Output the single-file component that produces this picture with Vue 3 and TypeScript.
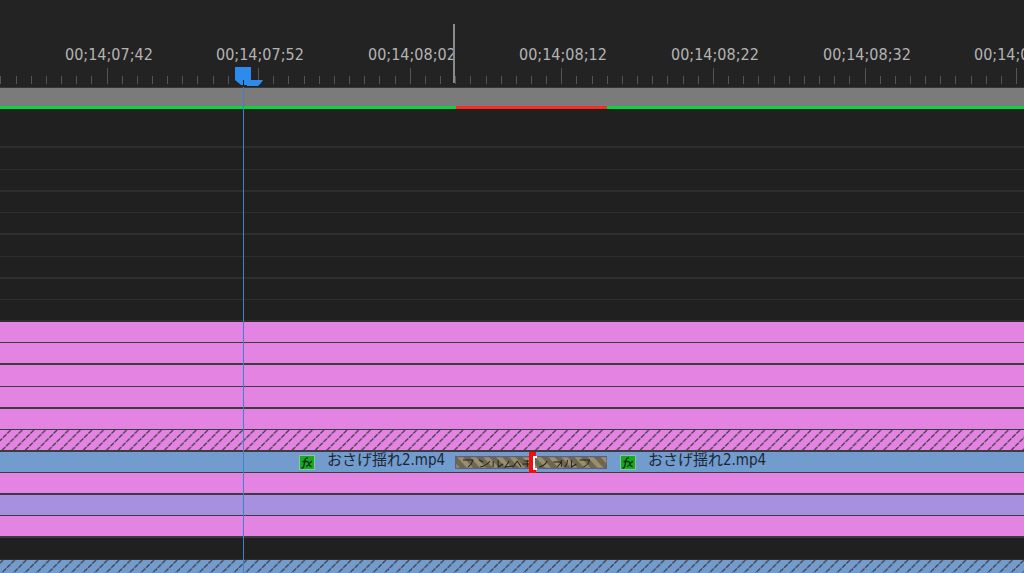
<script setup lang="ts">
interface Row { kind: string; h: number; heavy: boolean; clips?: boolean }

const labels = [
  '00;14;07;32', '00;14;07;42', '00;14;07;52', '00;14;08;02',
  '00;14;08;12', '00;14;08;22', '00;14;08;32', '00;14;08;42',
]
const span = 1024
const first = 107
const step = 151.6
const pct = (v: number) => `${(v / span) * 100}%`

const marks = labels.map((text, i) => ({ text, left: pct(Math.floor(first + (i - 1) * step)) }))
const ticks = Array.from({ length: 69 }, (_, i) => i - 8).map((n) => ({
  major: n % 10 === 0,
  left: pct(Math.floor(first + (n * step) / 10)),
}))

const rows: Row[] = [
  { kind: 'empty', h: 39, heavy: true },
  { kind: 'empty', h: 22, heavy: false },
  { kind: 'empty', h: 22, heavy: true },
  { kind: 'empty', h: 21, heavy: false },
  { kind: 'empty', h: 22, heavy: true },
  { kind: 'empty', h: 22, heavy: false },
  { kind: 'empty', h: 22, heavy: true },
  { kind: 'empty', h: 21, heavy: false },
  { kind: 'empty', h: 22, heavy: true },
  { kind: 'pink', h: 21, heavy: false },
  { kind: 'pink', h: 22, heavy: true },
  { kind: 'pink', h: 22, heavy: false },
  { kind: 'pink', h: 22, heavy: true },
  { kind: 'pink', h: 21, heavy: false },
  { kind: 'pink hatch', h: 22, heavy: true },
  { kind: 'blue', h: 21, heavy: false, clips: true },
  { kind: 'pink', h: 22, heavy: true },
  { kind: 'violet', h: 21, heavy: false },
  { kind: 'pink', h: 22, heavy: true },
  { kind: 'empty', h: 22, heavy: false },
  { kind: 'blue hatch', h: 22, heavy: false },
]
const clipName = 'おさげ揺れ2.mp4'
const clips = [{ left: pct(299) }, { left: pct(620) }]
</script>

<template>
  <main class="timeline">
    <header class="ruler">
      <span v-for="m in marks" :key="m.text" class="label" :style="{ left: m.left }">{{ m.text }}</span>
      <i v-for="t in ticks" :key="t.left" class="tick" :class="{ major: t.major }" :style="{ left: t.left }"></i>
      <i class="snap"></i>
    </header>
    <div class="workbar"></div>
    <div class="render"><i class="ready lead"></i><i class="pending"></i><i class="ready rest"></i></div>
    <section class="tracks">
      <div v-for="(r, i) in rows" :key="i" class="row" :class="[r.kind, { heavy: r.heavy }]" :style="{ height: r.h + 'px' }">
        <svg v-if="r.kind.includes('hatch')" class="lines" width="100%" height="100%" aria-hidden="true">
          <defs>
            <pattern :id="'h' + i" :x="r.kind.includes('blue') ? 4 : 0" width="11.6" height="22" patternUnits="userSpaceOnUse">
              <path d="M-.9 0 l-22 22 M10.7 0 l-22 22 M22.3 0 l-22 22 M33.9 0 l-22 22" stroke="#463f4a" stroke-width="1.3" stroke-dasharray="5 1" fill="none" />
            </pattern>
          </defs>
          <rect width="100%" height="100%" :fill="`url(#h${i})`" />
        </svg>
        <template v-if="r.clips">
          <div v-for="c in clips" :key="c.left" class="clip" :style="{ left: c.left }">
            <svg class="fx" viewBox="0 0 16 15" aria-hidden="true">
              <rect x=".5" y=".5" width="15" height="14" fill="#12ab22" stroke="#9dbb9f" />
              <path d="M2.5 13 Q4.5 13.5 5 10 L6 5 Q6.5 2.5 9 3 M3.5 6.5 H8 M8 6.5 Q9.5 6.5 10 9 T12.5 11.5 M13 6.5 Q11.5 6.5 10 9 T7 11.5" fill="none" stroke="#0a2d10" stroke-width="1.3" />
            </svg>
            <span class="name">{{ clipName }}</span>
          </div>
          <div class="transition">
            <svg class="bar" viewBox="0 0 152 13" preserveAspectRatio="none" aria-hidden="true">
              <defs>
                <pattern id="stripe" width="13" height="13" patternUnits="userSpaceOnUse">
                  <rect width="13" height="13" fill="#9a9070" />
                  <path d="M-6 0 H1 L13 13 H6 Z M7 0 H14 L26 13 H19 Z" fill="#6c6653" />
                </pattern>
              </defs>
              <rect x=".5" y=".5" width="151" height="12" fill="url(#stripe)" stroke="#685c7c" stroke-width="1.5" />
              <path d="M8 4 H18 Q17 8 13 11 M24 4 L28 6 M25 11 Q31 10 35 5 M38 5 V11 M43 4 V11 L48 8 M54 5 L50 11 L58 10 M62 5 L58 11 M62 5 L66 11 M69 5 H76 M67 8 H78 M72 4 V11 M84 11 Q89 10 92 5 M98 6 H106 L102 11 M106 4 V11 M112 4 Q112 9 109 11 M116 4 V11 L121 8 M124 4 H134 Q133 9 128 11" fill="none" stroke="#22211b" />
            </svg>
            <svg class="trim" viewBox="0 0 8 21" aria-hidden="true">
              <path d="M0 0 H7 V5 H4 V17 H7 V21 H0 Z" fill="#f40d0d" />
              <path d="M8 4 H4 V18 H8 V16 H6 V6 H8 Z" fill="#fff" />
            </svg>
          </div>
        </template>
      </div>
    </section>
    <div class="playhead">
      <svg width="30" height="20" viewBox="0 0 30 20" aria-hidden="true">
        <path d="M0 0 H16 V13 H28 L26 16 L23 19 H12 V18 H6 L0 13 Z" fill="#2d8ceb" />
        <path d="M8.5 13 V18" stroke="#101820" />
      </svg>
    </div>
  </main>
</template>

<style>
body { background: #202020; }
</style>

<style scoped>
.timeline { position: relative; height: 100vh; overflow: hidden; display: flex; flex-direction: column; background: #202020; font-family: "DejaVu Sans Condensed", "Noto Sans CJK JP", sans-serif; }
.ruler { position: relative; flex: none; height: 88px; background: #232323; box-sizing: border-box; border-bottom: 1px solid #363636; }
.label { position: absolute; top: 45px; margin-left: -42px; font-size: 16px; line-height: 20px; color: #b4b4b4; white-space: nowrap; }
.tick { position: absolute; top: 76px; width: 1px; height: 8px; background: #555; }
.tick.major { top: 68px; height: 16px; }
.snap { position: absolute; left: 44.2%; top: 24px; width: 2px; height: 59px; background: #8a8a8a; }
.workbar { flex: none; height: 18px; background: #7b7b7b; }
.render { flex: none; height: 3px; display: flex; }
.ready { background: #06d83b; }
.lead { width: 44.5%; }
.pending { width: 14.8%; background: #fb2c1b; }
.rest { flex: 1; }
.row { position: relative; flex: none; box-sizing: border-box; border-bottom: 1px solid #3d3a40; }
.row.heavy { border-bottom-width: 2px; }
.tracks { flex: none; }
.empty { background: #202020; border-color: #2e2e2e; }
.pink { background: #e383e2; }
.blue { background: #729bce; }
.violet { background: #a690df; }
.lines { display: block; }
.clip { position: absolute; top: 0; height: 20px; display: flex; align-items: center; gap: 12px; font-size: 15px; color: #1c2732; white-space: nowrap; }
.name { line-height: 16px; padding-bottom: 4px; }
.fx { width: 16px; height: 15px; }
.transition { position: absolute; left: 44.4%; top: 4px; width: 14.9%; height: 13px; }
.bar { display: block; width: 100%; height: 100%; }
.trim { position: absolute; left: 49%; top: -4px; width: 8px; height: 21px; }
.playhead { position: absolute; left: 22.95%; top: 67px; bottom: 0; }
.playhead::after { content: ""; position: absolute; left: 8px; top: 20px; bottom: 0; width: 1px; background: #3d83cc; }
.playhead svg { display: block; }
</style>
